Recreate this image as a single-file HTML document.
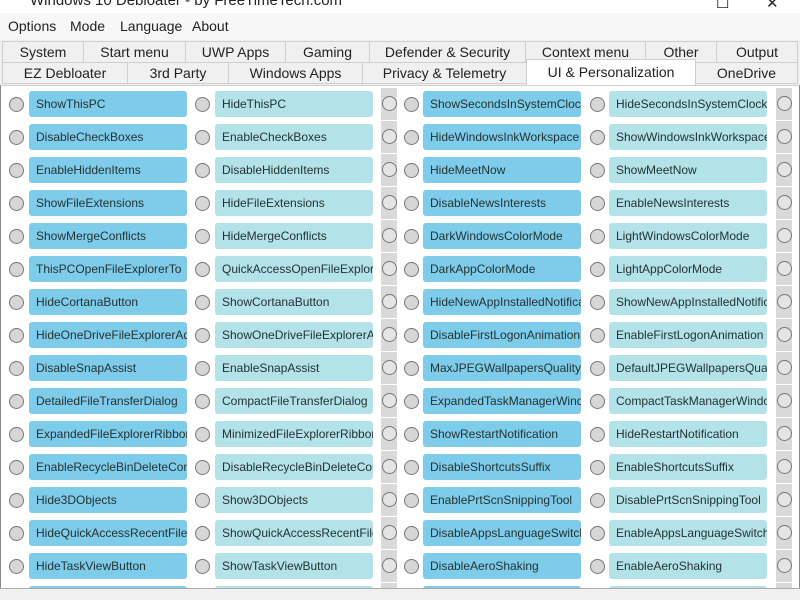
<!DOCTYPE html>
<html><head><meta charset="utf-8"><style>
*{margin:0;padding:0;box-sizing:border-box}
body{width:800px;height:600px;overflow:hidden;background:#fff;font-family:"Liberation Sans",sans-serif;position:relative;color:#222}
.title{position:absolute;top:-8px;left:30px;font-size:15px;color:#222}
.tb{position:absolute;top:-6px;font-size:15px}
.menu{position:absolute;top:13px;left:0;width:800px;height:27px;background:#f7f7f7;font-size:14px}
.menu span{position:absolute;top:5px}
.tabs{position:absolute;top:40px;left:0;width:800px;height:46px;background:#f0f0f0}
.tab{position:absolute;height:22px;border:1px solid #cfcfcf;background:#f0f0f0;font-size:14px;text-align:center;line-height:20px;color:#222}
.tab.sel{background:#fff;border-bottom:none;height:26px;top:19px !important;line-height:24px}
.content{position:absolute;top:85px;left:0;width:800px;height:503px;border-left:1px solid #888;border-right:1px solid #888;border-top:1px solid #cfcfcf;overflow:hidden}
.row{position:absolute;left:0;width:800px;height:26px}
.r{position:absolute;top:6px;width:15px;height:15px;border-radius:50%;border:1px solid #777;background:#d6d6d6}
.b{position:absolute;top:0;width:158px;height:26px;border-radius:3px;font-size:12px;line-height:26px;padding-left:7px;white-space:nowrap;overflow:hidden;color:#233}
.b1{left:28px;background:#7ecbea}
.b2{left:214px;background:#b3e2e8}
.b3{left:422px;background:#7ecbea}
.b4{left:608px;background:#b3e2e8}
.g{position:absolute;top:-3px;width:16px;height:32px;background:#d9d9d9}
.g .r{left:1px;top:8px;background:#e4e4e4}
.status{position:absolute;top:588px;left:0;width:800px;height:12px;background:#f0f0f0;border-top:1px solid #aaa}
</style></head><body>
<div class="title">Windows 10 Debloater - by FreeTimeTech.com</div>
<div class="tb" style="left:716px">☐</div><div class="tb" style="left:766px">✕</div>
<div class="menu"><span style="left:8px">Options</span><span style="left:70px">Mode</span><span style="left:120px">Language</span><span style="left:192px">About</span></div>
<div class="tabs">
<div class="tab" style="top:1px;left:2px;width:82px">System</div>
<div class="tab" style="top:1px;left:83px;width:103px">Start menu</div>
<div class="tab" style="top:1px;left:185px;width:101px">UWP Apps</div>
<div class="tab" style="top:1px;left:285px;width:85px">Gaming</div>
<div class="tab" style="top:1px;left:369px;width:157px">Defender &amp; Security</div>
<div class="tab" style="top:1px;left:525px;width:121px">Context menu</div>
<div class="tab" style="top:1px;left:645px;width:72px">Other</div>
<div class="tab" style="top:1px;left:716px;width:82px">Output</div>
<div class="tab" style="top:22px;left:2px;width:126px">EZ Debloater</div>
<div class="tab" style="top:22px;left:127px;width:102px">3rd Party</div>
<div class="tab" style="top:22px;left:228px;width:135px">Windows Apps</div>
<div class="tab" style="top:22px;left:362px;width:165px">Privacy &amp; Telemetry</div>
<div class="tab" style="top:22px;left:695px;width:103px">OneDrive</div>
<div class="tab sel" style="left:526px;width:170px">UI &amp; Personalization</div>
</div>
<div class="content">
<div class="row" style="top:5px"><div class="r" style="left:8px"></div><div class="b b1">ShowThisPC</div><div class="r" style="left:194px"></div><div class="b b2">HideThisPC</div><div class="g" style="left:380px"><div class="r"></div></div><div class="r" style="left:403px"></div><div class="b b3">ShowSecondsInSystemClock</div><div class="r" style="left:589px"></div><div class="b b4">HideSecondsInSystemClock</div><div class="g" style="left:775px"><div class="r"></div></div></div>
<div class="row" style="top:38px"><div class="r" style="left:8px"></div><div class="b b1">DisableCheckBoxes</div><div class="r" style="left:194px"></div><div class="b b2">EnableCheckBoxes</div><div class="g" style="left:380px"><div class="r"></div></div><div class="r" style="left:403px"></div><div class="b b3">HideWindowsInkWorkspace</div><div class="r" style="left:589px"></div><div class="b b4">ShowWindowsInkWorkspace</div><div class="g" style="left:775px"><div class="r"></div></div></div>
<div class="row" style="top:71px"><div class="r" style="left:8px"></div><div class="b b1">EnableHiddenItems</div><div class="r" style="left:194px"></div><div class="b b2">DisableHiddenItems</div><div class="g" style="left:380px"><div class="r"></div></div><div class="r" style="left:403px"></div><div class="b b3">HideMeetNow</div><div class="r" style="left:589px"></div><div class="b b4">ShowMeetNow</div><div class="g" style="left:775px"><div class="r"></div></div></div>
<div class="row" style="top:104px"><div class="r" style="left:8px"></div><div class="b b1">ShowFileExtensions</div><div class="r" style="left:194px"></div><div class="b b2">HideFileExtensions</div><div class="g" style="left:380px"><div class="r"></div></div><div class="r" style="left:403px"></div><div class="b b3">DisableNewsInterests</div><div class="r" style="left:589px"></div><div class="b b4">EnableNewsInterests</div><div class="g" style="left:775px"><div class="r"></div></div></div>
<div class="row" style="top:137px"><div class="r" style="left:8px"></div><div class="b b1">ShowMergeConflicts</div><div class="r" style="left:194px"></div><div class="b b2">HideMergeConflicts</div><div class="g" style="left:380px"><div class="r"></div></div><div class="r" style="left:403px"></div><div class="b b3">DarkWindowsColorMode</div><div class="r" style="left:589px"></div><div class="b b4">LightWindowsColorMode</div><div class="g" style="left:775px"><div class="r"></div></div></div>
<div class="row" style="top:170px"><div class="r" style="left:8px"></div><div class="b b1">ThisPCOpenFileExplorerTo</div><div class="r" style="left:194px"></div><div class="b b2">QuickAccessOpenFileExplorer</div><div class="g" style="left:380px"><div class="r"></div></div><div class="r" style="left:403px"></div><div class="b b3">DarkAppColorMode</div><div class="r" style="left:589px"></div><div class="b b4">LightAppColorMode</div><div class="g" style="left:775px"><div class="r"></div></div></div>
<div class="row" style="top:203px"><div class="r" style="left:8px"></div><div class="b b1">HideCortanaButton</div><div class="r" style="left:194px"></div><div class="b b2">ShowCortanaButton</div><div class="g" style="left:380px"><div class="r"></div></div><div class="r" style="left:403px"></div><div class="b b3">HideNewAppInstalledNotification</div><div class="r" style="left:589px"></div><div class="b b4">ShowNewAppInstalledNotification</div><div class="g" style="left:775px"><div class="r"></div></div></div>
<div class="row" style="top:236px"><div class="r" style="left:8px"></div><div class="b b1">HideOneDriveFileExplorerAd</div><div class="r" style="left:194px"></div><div class="b b2">ShowOneDriveFileExplorerAd</div><div class="g" style="left:380px"><div class="r"></div></div><div class="r" style="left:403px"></div><div class="b b3">DisableFirstLogonAnimation</div><div class="r" style="left:589px"></div><div class="b b4">EnableFirstLogonAnimation</div><div class="g" style="left:775px"><div class="r"></div></div></div>
<div class="row" style="top:269px"><div class="r" style="left:8px"></div><div class="b b1">DisableSnapAssist</div><div class="r" style="left:194px"></div><div class="b b2">EnableSnapAssist</div><div class="g" style="left:380px"><div class="r"></div></div><div class="r" style="left:403px"></div><div class="b b3">MaxJPEGWallpapersQuality</div><div class="r" style="left:589px"></div><div class="b b4">DefaultJPEGWallpapersQuality</div><div class="g" style="left:775px"><div class="r"></div></div></div>
<div class="row" style="top:302px"><div class="r" style="left:8px"></div><div class="b b1">DetailedFileTransferDialog</div><div class="r" style="left:194px"></div><div class="b b2">CompactFileTransferDialog</div><div class="g" style="left:380px"><div class="r"></div></div><div class="r" style="left:403px"></div><div class="b b3">ExpandedTaskManagerWindow</div><div class="r" style="left:589px"></div><div class="b b4">CompactTaskManagerWindow</div><div class="g" style="left:775px"><div class="r"></div></div></div>
<div class="row" style="top:335px"><div class="r" style="left:8px"></div><div class="b b1">ExpandedFileExplorerRibbon</div><div class="r" style="left:194px"></div><div class="b b2">MinimizedFileExplorerRibbon</div><div class="g" style="left:380px"><div class="r"></div></div><div class="r" style="left:403px"></div><div class="b b3">ShowRestartNotification</div><div class="r" style="left:589px"></div><div class="b b4">HideRestartNotification</div><div class="g" style="left:775px"><div class="r"></div></div></div>
<div class="row" style="top:368px"><div class="r" style="left:8px"></div><div class="b b1">EnableRecycleBinDeleteConfirm</div><div class="r" style="left:194px"></div><div class="b b2">DisableRecycleBinDeleteConfirm</div><div class="g" style="left:380px"><div class="r"></div></div><div class="r" style="left:403px"></div><div class="b b3">DisableShortcutsSuffix</div><div class="r" style="left:589px"></div><div class="b b4">EnableShortcutsSuffix</div><div class="g" style="left:775px"><div class="r"></div></div></div>
<div class="row" style="top:401px"><div class="r" style="left:8px"></div><div class="b b1">Hide3DObjects</div><div class="r" style="left:194px"></div><div class="b b2">Show3DObjects</div><div class="g" style="left:380px"><div class="r"></div></div><div class="r" style="left:403px"></div><div class="b b3">EnablePrtScnSnippingTool</div><div class="r" style="left:589px"></div><div class="b b4">DisablePrtScnSnippingTool</div><div class="g" style="left:775px"><div class="r"></div></div></div>
<div class="row" style="top:434px"><div class="r" style="left:8px"></div><div class="b b1">HideQuickAccessRecentFiles</div><div class="r" style="left:194px"></div><div class="b b2">ShowQuickAccessRecentFiles</div><div class="g" style="left:380px"><div class="r"></div></div><div class="r" style="left:403px"></div><div class="b b3">DisableAppsLanguageSwitch</div><div class="r" style="left:589px"></div><div class="b b4">EnableAppsLanguageSwitch</div><div class="g" style="left:775px"><div class="r"></div></div></div>
<div class="row" style="top:467px"><div class="r" style="left:8px"></div><div class="b b1">HideTaskViewButton</div><div class="r" style="left:194px"></div><div class="b b2">ShowTaskViewButton</div><div class="g" style="left:380px"><div class="r"></div></div><div class="r" style="left:403px"></div><div class="b b3">DisableAeroShaking</div><div class="r" style="left:589px"></div><div class="b b4">EnableAeroShaking</div><div class="g" style="left:775px"><div class="r"></div></div></div>
<div class="row" style="top:500px"><div class="b b1"></div><div class="b b2"></div><div class="g" style="left:380px"></div><div class="b b3"></div><div class="b b4"></div><div class="g" style="left:775px"></div></div>
</div>
<div class="status"></div>
</body></html>
